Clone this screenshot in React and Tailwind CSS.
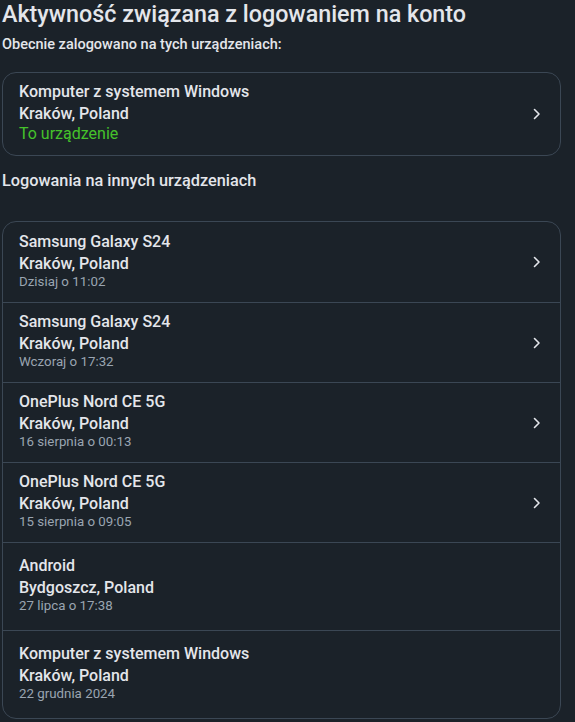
import React from "react";

const Chevron = () => (
  <svg width="10" height="12" viewBox="0 0 10 12" fill="none" className="shrink-0">
    <path d="M2.5 1.5 L7 6 L2.5 10.5" stroke="#e4e6eb" strokeWidth="1.6" strokeLinecap="round" strokeLinejoin="round" />
  </svg>
);

const others = [
  { name: "Samsung Galaxy S24", loc: "Kraków, Poland", date: "Dzisiaj o 11:02", chev: true },
  { name: "Samsung Galaxy S24", loc: "Kraków, Poland", date: "Wczoraj o 17:32", chev: true },
  { name: "OnePlus Nord CE 5G", loc: "Kraków, Poland", date: "16 sierpnia o 00:13", chev: true },
  { name: "OnePlus Nord CE 5G", loc: "Kraków, Poland", date: "15 sierpnia o 09:05", chev: true },
  { name: "Android", loc: "Bydgoszcz, Poland", date: "27 lipca o 17:38", chev: false },
  { name: "Komputer z systemem Windows", loc: "Kraków, Poland", date: "22 grudnia 2024", chev: false },
];

export default function App() {
  return (
    <div
      className="min-h-[722px] w-[575px] overflow-hidden bg-[#1b2229] text-[#e4e6eb]"
      style={{ fontFamily: "Roboto, 'Noto Sans', sans-serif" }}
    >
      <div className="pl-[2px] pr-[14px]">
        <h1 className="pt-[0px] text-[23.3px] font-medium leading-[29px]">
          Aktywność związana z logowaniem na konto
        </h1>
        <p className="mt-[6px] text-[14.5px] font-medium leading-[20px]">
          Obecnie zalogowano na tych urządzeniach:
        </p>

        <div className="mt-[17px] flex h-[84px] items-center rounded-[14px] border border-[#3b4754] pl-[16px] pr-[18px]">
          <div className="flex-1 pb-[3px]">
            <div className="text-[16px] font-medium leading-[20px]">Komputer z systemem Windows</div>
            <div className="mt-[2px] text-[16px] font-medium leading-[20px]">Kraków, Poland</div>
            <div className="mt-[0px] text-[16px] leading-[20px] text-[#45c22b]">To urządzenie</div>
          </div>
          <Chevron />
        </div>

        <h2 className="mt-[14px] text-[16.3px] font-medium leading-[22px]">
          Logowania na innych urządzeniach
        </h2>

        <div className="mt-[29px] overflow-hidden rounded-[14px] border border-[#3b4754]">
          {others.map((o, i) => (
            <div
              key={i}
              className={`flex items-center pl-[16px] pr-[18px] ${i > 0 ? "border-t border-[#3b4754]" : ""} ${o.chev ? "h-[80px]" : "h-[88px]"}`}
            >
              <div className="flex-1 pb-[2px]">
                <div className="text-[16px] font-medium leading-[20px]">{o.name}</div>
                <div className="mt-[2px] text-[16px] font-medium leading-[20px]">{o.loc}</div>
                <div className="mt-[-1px] text-[13.3px] leading-[18px] text-[#9aa5b1]">{o.date}</div>
              </div>
              {o.chev && <Chevron />}
            </div>
          ))}
        </div>
      </div>
    </div>
  );
}
